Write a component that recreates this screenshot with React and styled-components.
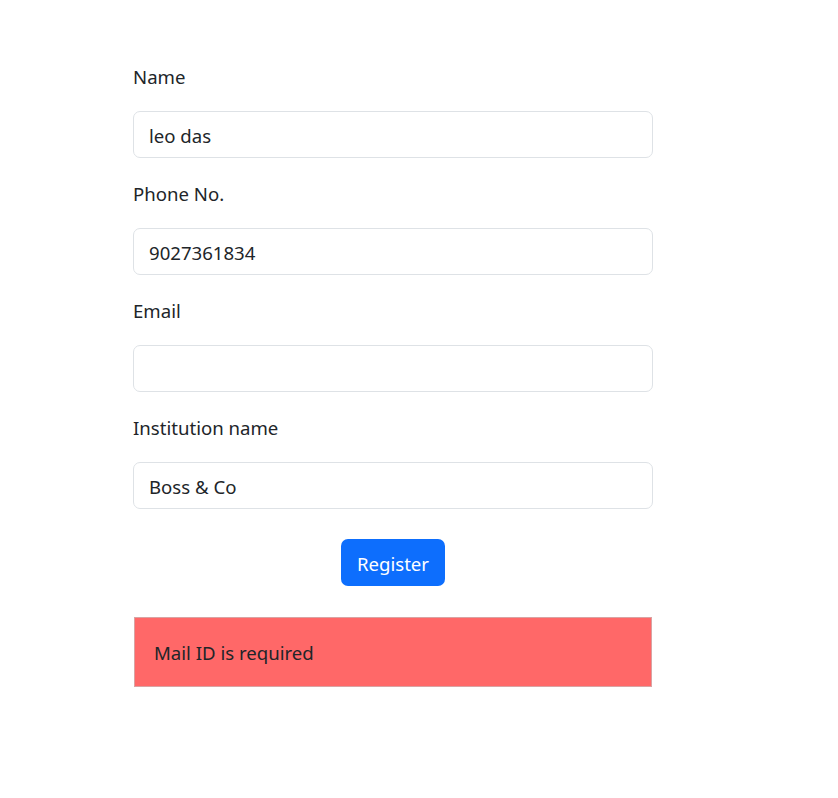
import React from 'react';
import styled, {createGlobalStyle} from 'styled-components';

const GlobalStyle = createGlobalStyle`
  body {
    margin: 0;
    background: #fff;
    font-family: "Segoe UI", "Noto Sans", "Open Sans", sans-serif;
    color: #212529;
  }
`;

const Page = styled.div`
  width: 838px;
  min-height: 798px;
  box-sizing: border-box;
  padding: 62px 0 0 133px;
`;

const Form = styled.form`
  width: 520px;
  display: flex;
  flex-direction: column;
`;

const Field = styled.div`
  display: flex;
  flex-direction: column;
  margin-bottom: 21px;
`;

const Label = styled.label`
  font-size: 18.6px;
  line-height: 30px;
  margin-bottom: 19px;
  height: 30px;
`;

const Input = styled.input`
  height: 47px;
  box-sizing: border-box;
  border: 1px solid #dee2e6;
  border-radius: 7px;
  padding: 2px 15px 0;
  font-family: inherit;
  font-size: 18.6px;
  color: #212529;
  outline: none;
`;

const Actions = styled.div`
  display: flex;
  justify-content: center;
  margin-top: 9px;
`;

const Button = styled.button`
  width: 104px;
  height: 47px;
  border: none;
  border-radius: 7px;
  background: #0d6efd;
  color: #fff;
  font-family: inherit;
  font-size: 18.6px;
  padding-top: 2px;
  cursor: pointer;
`;

const Alert = styled.div`
  margin: 31px 1px 0;
  height: 70px;
  box-sizing: border-box;
  background: #ff6868;
  border: 1px solid #d9a3a3;
  padding: 1px 19px 0;
  display: flex;
  align-items: center;
  font-size: 18.6px;
`;

const fields = [
    {label: 'Name', value: 'leo das'},
    {label: 'Phone No.', value: '9027361834'},
    {label: 'Email', value: ''},
    {label: 'Institution name', value: 'Boss & Co'},
];

const App = () => (
    <Page>
        <GlobalStyle/>
        <Form onSubmit={e => e.preventDefault()}>
            {fields.map(f => (
                <Field key={f.label}>
                    <Label>{f.label}</Label>
                    <Input defaultValue={f.value}/>
                </Field>
            ))}
            <Actions>
                <Button type="submit">Register</Button>
            </Actions>
            <Alert>Mail ID is required</Alert>
        </Form>
    </Page>
);

export default App;
